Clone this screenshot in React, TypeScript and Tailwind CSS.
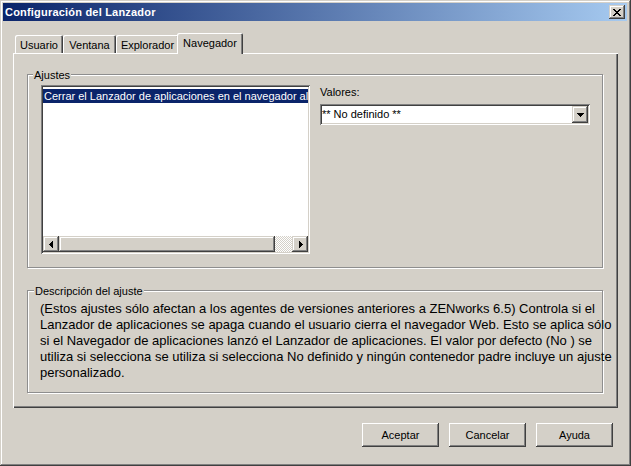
import React from "react";

const RAISED_BTN =
  "shadow-[inset_-1px_-1px_0_#404040,inset_1px_1px_0_#ffffff,inset_-2px_-2px_0_#808080]";
const RAISED2 =
  "shadow-[inset_-1px_-1px_0_#404040,inset_1px_1px_0_#d4d0c8,inset_-2px_-2px_0_#808080,inset_2px_2px_0_#ffffff]";
const SUNKEN =
  "shadow-[inset_1px_1px_0_#808080,inset_-1px_-1px_0_#ffffff,inset_2px_2px_0_#404040,inset_-2px_-2px_0_#d4d0c8]";
const ETCHED =
  "border border-[#8e8e8e] shadow-[inset_1px_1px_0_#ffffff,1px_1px_0_#ffffff]";
const TAB =
  "shadow-[inset_1px_1px_0_#ffffff,inset_-1px_0_0_#404040,inset_-2px_0_0_#808080] rounded-t-[2px]";

function CloseGlyph() {
  return (
    <svg width="8" height="7" viewBox="0 0 8 7" shapeRendering="crispEdges">
      <path
        fill="#000"
        d="M0 0h2v1H0zM6 0h2v1H6zM1 1h2v1H1zM5 1h2v1H5zM2 2h4v1H2zM3 3h2v1H3zM2 4h4v1H2zM1 5h2v1H1zM5 5h2v1H5zM0 6h2v1H0zM6 6h2v1H6z"
      />
    </svg>
  );
}

function LeftArrow() {
  return (
    <svg width="4" height="7" viewBox="0 0 4 7" shapeRendering="crispEdges">
      <path
        fill="#000"
        d="M3 0h1v1H3zM2 1h2v1H2zM1 2h3v1H1zM0 3h4v1H0zM1 4h3v1H1zM2 5h2v1H2zM3 6h1v1H3z"
      />
    </svg>
  );
}

function RightArrow() {
  return (
    <svg width="4" height="7" viewBox="0 0 4 7" shapeRendering="crispEdges">
      <path
        fill="#000"
        d="M0 0h1v1H0zM0 1h2v1H0zM0 2h3v1H0zM0 3h4v1H0zM0 4h3v1H0zM0 5h2v1H0zM0 6h1v1H0z"
      />
    </svg>
  );
}

function DownArrow() {
  return (
    <svg width="7" height="4" viewBox="0 0 7 4" shapeRendering="crispEdges">
      <path fill="#000" d="M0 0h7v1H0zM1 1h5v1H1zM2 2h3v1H2zM3 3h1v1H3z" />
    </svg>
  );
}

export default function App() {
  return (
    <div
      className={`w-[631px] h-[466px] bg-[#d4d0c8] flex flex-col font-['Liberation_Sans',Arial,sans-serif] text-[11px] text-black ${RAISED2}`}
    >
      {/* Title bar */}
      <div className="mt-[3px] ml-[3px] mr-[4px] h-[18px] bg-[linear-gradient(to_right,#0a246a,#a6caf0)] flex items-center justify-between pl-[2px] pr-[2px]">
        <span className="text-white font-bold text-[11px] leading-[13px] tracking-[0.2px]">
          Configuración del Lanzador
        </span>
        <div
          className={`w-[16px] h-[14px] bg-[#d4d0c8] flex items-center justify-center ${RAISED2}`}
        >
          <CloseGlyph />
        </div>
      </div>

      {/* Tabs */}
      <div className="mt-[12px] ml-[15px] flex items-end h-[20px]">
        <div className={`w-[48px] h-[18px] pt-[4px] text-center leading-[13px] ${TAB}`}>
          Usuario
        </div>
        <div className={`w-[53px] h-[18px] pt-[4px] text-center leading-[13px] ${TAB}`}>
          Ventana
        </div>
        <div className={`w-[63px] h-[18px] pt-[4px] text-center leading-[13px] ${TAB}`}>
          Explorador
        </div>
        <div
          className={`relative z-10 -ml-[2px] -mb-px w-[66px] h-[21px] pt-[4px] text-center leading-[13px] bg-[#d4d0c8] ${TAB}`}
        >
          Navegador
        </div>
      </div>

      {/* Tab panel */}
      <div className="ml-[13px] w-[605px] h-[355px] pl-[14px] pt-[21px] flex flex-col shadow-[inset_1px_1px_0_#ffffff,inset_-1px_-1px_0_#404040,inset_-2px_-2px_0_#808080]">
        {/* Ajustes group */}
        <div className={`relative w-[576px] h-[194px] ${ETCHED} flex pl-[13px] pt-[10px]`}>
          <span className="absolute -top-[6px] left-[5px] px-[1px] bg-[#d4d0c8] leading-[13px]">
            Ajustes
          </span>
          <div className={`w-[269px] h-[169px] bg-white p-[2px] flex flex-col ${SUNKEN}`}>
            <div className="flex-1 pt-[2px] overflow-hidden">
              <div className="h-[14px] leading-[14px] bg-[#0a246a] text-white whitespace-nowrap overflow-hidden pl-[1px]">
                Cerrar el Lanzador de aplicaciones en el navegador al salir
              </div>
            </div>
            <div className="h-[16px] flex">
              <div
                className={`w-[16px] h-[16px] bg-[#d4d0c8] flex items-center justify-center ${RAISED2}`}
              >
                <LeftArrow />
              </div>
              <div className={`w-[216px] h-[16px] bg-[#d4d0c8] ${RAISED2}`} />
              <div className="flex-1 h-[16px] bg-[repeating-conic-gradient(#d4d0c8_0_25%,#ffffff_0_50%)] bg-[length:2px_2px]" />
              <div
                className={`w-[16px] h-[16px] bg-[#d4d0c8] flex items-center justify-center pl-[1px] ${RAISED2}`}
              >
                <RightArrow />
              </div>
            </div>
          </div>
          <div className="ml-[10px] w-[270px] flex flex-col">
            <div className="h-[19px] pt-[1px] leading-[13px]">Valores:</div>
            <div className={`h-[21px] bg-white p-[2px] flex ${SUNKEN}`}>
              <div className="flex-1 leading-[17px] whitespace-nowrap">** No definido **</div>
              <div
                className={`w-[16px] h-[17px] bg-[#d4d0c8] flex items-center justify-center ${RAISED2}`}
              >
                <DownArrow />
              </div>
            </div>
          </div>
        </div>

        {/* Descripción group */}
        <div
          className={`relative mt-[22px] w-[576px] h-[103px] ${ETCHED} pl-[12px] pt-[10px] text-[13px] leading-[16px]`}
        >
          <span className="absolute -top-[6px] left-[6px] px-[1px] bg-[#d4d0c8] leading-[13px] text-[11px]">
            Descripción del ajuste
          </span>
          <div className="whitespace-nowrap">
            (Estos ajustes sólo afectan a los agentes de versiones anteriores a ZENworks 6.5) Controla si el
          </div>
          <div className="whitespace-nowrap">
            Lanzador de aplicaciones se apaga cuando el usuario cierra el navegador Web. Esto se aplica sólo
          </div>
          <div className="whitespace-nowrap">
            si el Navegador de aplicaciones lanzó el Lanzador de aplicaciones. El valor por defecto (No ) se
          </div>
          <div className="whitespace-nowrap">
            utiliza si selecciona se utiliza si selecciona No definido y ningún contenedor padre incluye un ajuste
          </div>
          <div className="whitespace-nowrap">personalizado.</div>
        </div>
      </div>

      {/* Buttons */}
      <div className="mt-[15px] pr-[18px] flex justify-end gap-[10px]">
        <div className={`w-[77px] h-[24px] flex items-center justify-center ${RAISED_BTN}`}>
          Aceptar
        </div>
        <div className={`w-[77px] h-[24px] flex items-center justify-center ${RAISED_BTN}`}>
          Cancelar
        </div>
        <div className={`w-[77px] h-[24px] flex items-center justify-center ${RAISED_BTN}`}>
          Ayuda
        </div>
      </div>
    </div>
  );
}
